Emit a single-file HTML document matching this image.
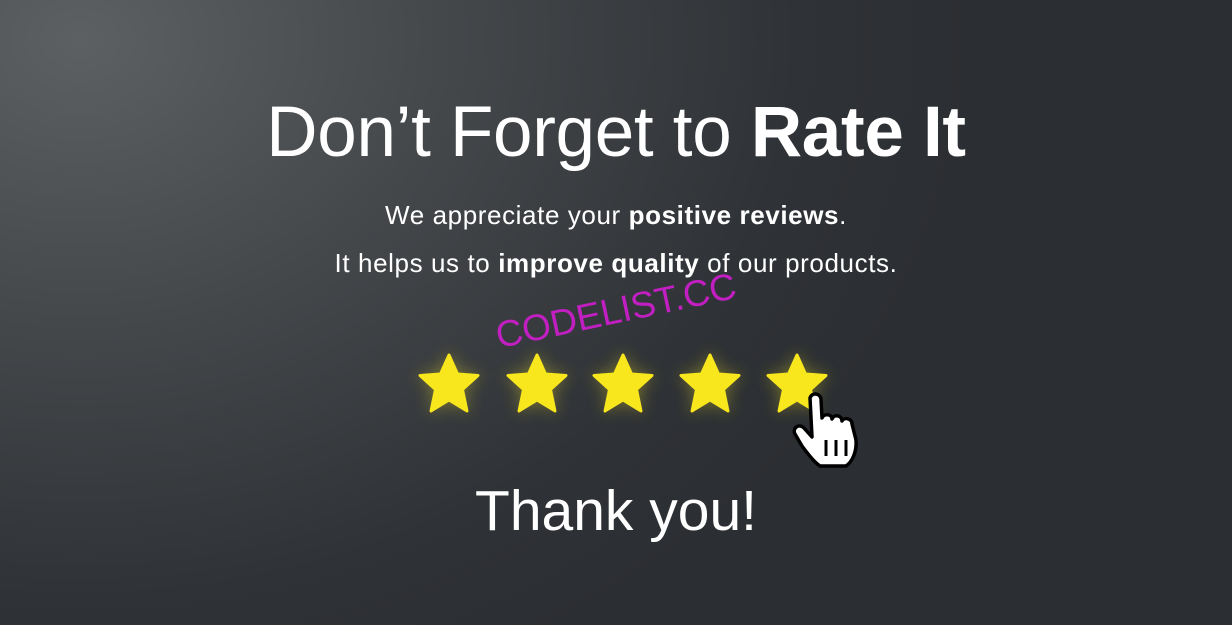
<!DOCTYPE html>
<html><head><meta charset="utf-8"><style>
html,body{margin:0;padding:0}
body{width:1232px;height:625px;overflow:hidden;position:relative;font-family:"Liberation Sans",sans-serif;color:#fff;
background:radial-gradient(ellipse 900px 700px at 80px 40px,#5d6063 0%,#45484b 40%,#2f3236 80%,#2b2e32 100%);}
.t{position:absolute;left:0;width:1232px;text-align:center;white-space:nowrap}
h1{margin:0;font-weight:normal;font-size:71px;top:92px;letter-spacing:-0.3px}
.s{font-size:26px;letter-spacing:0.6px}
.wm{position:absolute;left:492px;top:316px;color:#c21fc2;font-size:37px;transform:rotate(-12deg);transform-origin:left top}
</style></head><body>
<h1 class="t">Don’t Forget to <b>Rate It</b></h1>
<div class="t s" style="top:200px">We appreciate your <b>positive reviews</b>.</div>
<div class="t s" style="top:248px">It helps us to <b>improve quality</b> of our products.</div>
<div class="wm">CODELIST.CC</div>
<svg style="position:absolute;left:0;top:0" width="1232" height="625">
<defs>
<filter id="g" x="-50%" y="-50%" width="200%" height="200%"><feGaussianBlur stdDeviation="8"/></filter>
<path id="st" d="M0,-29 L8.5,-10 L29,-8.5 L13.5,5.5 L18,27 L0,16 L-18,27 L-13.5,5.5 L-29,-8.5 L-8.5,-10 Z" stroke="#f8e71c" stroke-width="3" stroke-linejoin="round"/>
</defs>
<g fill="#f8e71c">
<g opacity="0.35" filter="url(#g)"><use href="#st" x="449" y="384"/><use href="#st" x="537" y="384"/><use href="#st" x="623" y="384"/><use href="#st" x="710" y="384"/><use href="#st" x="797" y="384"/></g>
<use href="#st" x="449" y="384"/><use href="#st" x="537" y="384"/><use href="#st" x="623" y="384"/><use href="#st" x="710" y="384"/><use href="#st" x="797" y="384"/>
</g>
<path d="M810,398 C812,392 820,393 821,399 L822,418 C824,413 832,414 832,419 C834,414 842,415 842,421 C844,417 852,418 852,424 L856,440 C857,452 852,462 846,466 L820,466 C814,462 808,454 802,446 L795,434 C792,428 799,423 804,428 L812,437 Z" fill="#fff" stroke="#000" stroke-width="3.5" stroke-linejoin="round"/>
<path d="M826,440 V456 M836,440 V456 M846,440 V456" stroke="#000" stroke-width="3"/>
</svg>
<div class="t" style="top:478px;font-size:57px">Thank you!</div>
</body></html>
